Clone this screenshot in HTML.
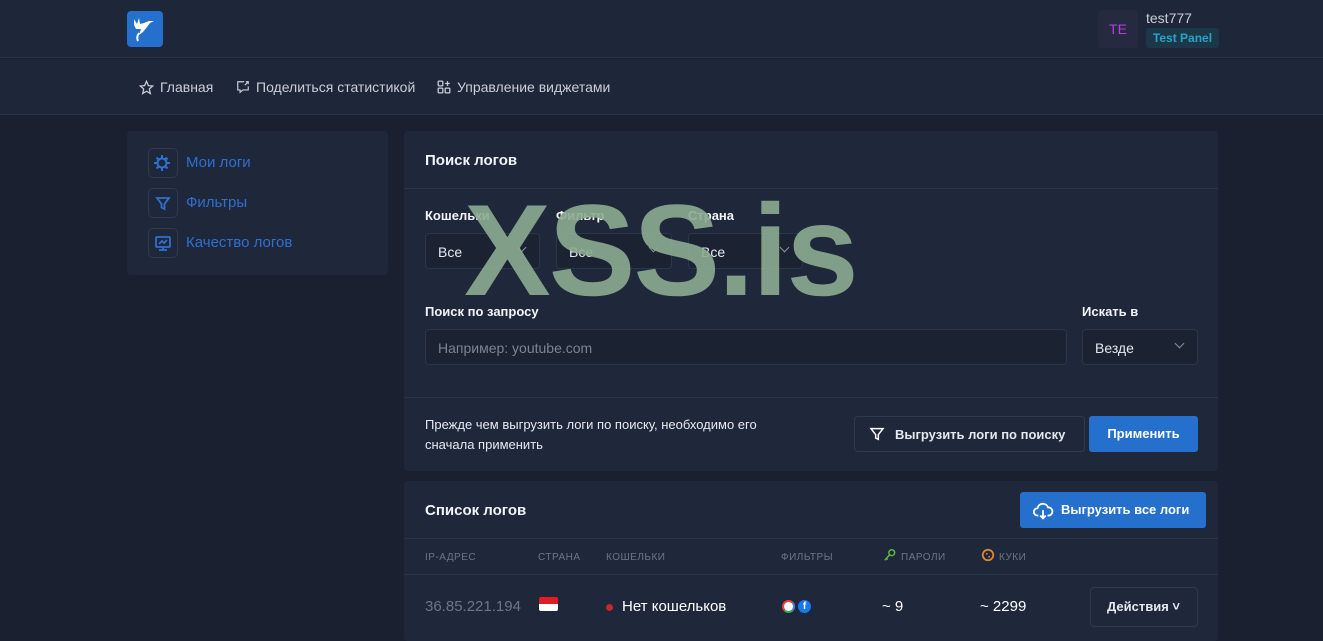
<!DOCTYPE html>
<html><head><meta charset="utf-8"><style>
*{box-sizing:border-box;margin:0;padding:0}
body{width:1323px;height:621px;overflow:hidden;background:#1a2030;font-family:"Liberation Sans",sans-serif;color:#e6e9ef;position:relative}
.hdr{position:absolute;left:0;top:0;width:1323px;height:58px;background:#1e2639;border-bottom:1px solid #2b3548}
.nav{position:absolute;left:0;top:59px;width:1323px;height:56px;background:#1e2639;border-bottom:1px solid #2b3548}
.nav span{position:absolute;top:20px;font-size:14px;color:#c9ced8}
.card{position:absolute;background:#1f283b;border-radius:4px}
.lbl{position:absolute;font-size:13px;font-weight:bold;color:#f1f3f7}
.sel{position:absolute;height:36px;border:1px solid #2c3649;border-radius:4px;background:#1b2232;font-size:14px;color:#e6e9ef;padding:10px 12px}
.sel i{position:absolute;right:14px;top:10px;width:7px;height:7px;border-right:1.3px solid #8a93a3;border-bottom:1.3px solid #8a93a3;transform:rotate(45deg)}
.side{position:absolute;left:148px;width:30px;height:30px;border:1px solid #2e3a50;border-radius:5px}
.sl{position:absolute;left:186px;font-size:15px;color:#2f6fd0}
.th{position:absolute;top:552px;font-size:10px;color:#6d7686;letter-spacing:.5px}
</style></head><body>
<div class="hdr">
 <div style="position:absolute;left:127px;top:11px;width:36px;height:36px;background:#2470cc;border-radius:4px">
  <svg width="36" height="36" viewBox="0 0 36 36"><path d="M7 8l3 5 2-6 1 6 4-1 5-2 5 0-4 2-3 4-4 5-4 3 2-6-5 0-2-4z" fill="#fff"/><path d="M12 22c-2 3-2 6-1 8" stroke="#fff" stroke-width="2" fill="none"/></svg>
 </div>
 <div style="position:absolute;left:1098px;top:10px;width:40px;height:38px;background:#262a40;border-radius:3px;color:#b23fd6;font-size:14px;text-align:center;line-height:38px">TE</div>
 <div style="position:absolute;left:1146px;top:10px;font-size:14px;color:#c9ced8">test777</div>
 <div style="position:absolute;left:1146px;top:28px;width:73px;height:20px;background:#1c3848;border-radius:3px;color:#29a3c9;font-size:12px;font-weight:bold;text-align:center;line-height:20px">Test Panel</div>
</div>
<div class="nav">
 <svg style="position:absolute;left:139px;top:21px" width="15" height="15" viewBox="0 0 24 24"><path d="M12 2l3 7 7 .6-5.5 4.8 1.7 7.3L12 18l-6.2 3.7 1.7-7.3L2 9.6 9 9z" fill="none" stroke="#c9ced8" stroke-width="2"/></svg>
 <span style="left:160px">Главная</span>
 <svg style="position:absolute;left:236px;top:21px" width="14" height="14" viewBox="0 0 24 24"><path d="M14 3H3v14h4v4l5-4h9v-6M17 3h4v4M21 3l-6 6" fill="none" stroke="#c9ced8" stroke-width="2"/></svg>
 <span style="left:256px">Поделиться статистикой</span>
 <svg style="position:absolute;left:437px;top:21px" width="14" height="14" viewBox="0 0 24 24"><rect x="2" y="2" width="8" height="8" rx="1.5" fill="none" stroke="#c9ced8" stroke-width="2.2"/><rect x="2" y="14" width="8" height="8" rx="1.5" fill="none" stroke="#c9ced8" stroke-width="2.2"/><rect x="14" y="14" width="8" height="8" rx="1.5" fill="none" stroke="#c9ced8" stroke-width="2.2"/><path d="M18 2v8M14 6h8" stroke="#c9ced8" stroke-width="2.2"/></svg>
 <span style="left:457px">Управление виджетами</span>
</div>

<div class="card" style="left:127px;top:131px;width:261px;height:144px"></div>
<div class="side" style="top:148px"><svg width="28" height="28" viewBox="0 0 28 28"><circle cx="13" cy="14" r="4.5" fill="none" stroke="#2f6fd0" stroke-width="2"/><path d="M13 6v3M13 19v3M5 14h3M18 14h3M7.5 8.5l2 2M16.5 17.5l2 2M7.5 19.5l2-2M16.5 8.5l2 2" stroke="#2f6fd0" stroke-width="2"/></svg></div>
<div class="sl" style="top:154px">Мои логи</div>
<div class="side" style="top:188px"><svg width="28" height="28" viewBox="0 0 28 28"><path d="M8 9h12l-4.5 6v5l-3-1.5V15z" fill="none" stroke="#2f6fd0" stroke-width="1.8"/></svg></div>
<div class="sl" style="top:194px">Фильтры</div>
<div class="side" style="top:228px"><svg width="28" height="28" viewBox="0 0 28 28"><rect x="7" y="8" width="14" height="10" rx="1" fill="none" stroke="#2f6fd0" stroke-width="1.8"/><path d="M10 15l3-3 2 2 3-3M14 18v3M10 21h8" fill="none" stroke="#2f6fd0" stroke-width="1.8"/></svg></div>
<div class="sl" style="top:234px">Качество логов</div>

<div class="card" style="left:404px;top:131px;width:814px;height:340px"></div>
<div style="position:absolute;left:404px;top:188px;width:814px;border-top:1px solid #2b3548"></div>
<div style="position:absolute;left:404px;top:397px;width:814px;border-top:1px solid #2b3548"></div>
<div class="lbl" style="left:425px;top:152px;font-size:15px">Поиск логов</div>
<div class="lbl" style="left:425px;top:208px">Кошельки</div>
<div class="lbl" style="left:556px;top:208px">Фильтр</div>
<div class="lbl" style="left:688px;top:208px">Страна</div>
<div class="sel" style="left:425px;top:233px;width:115px">Все<i></i></div>
<div class="sel" style="left:556px;top:233px;width:116px">Все<i></i></div>
<div class="sel" style="left:688px;top:233px;width:115px">Все<i></i></div>
<div class="lbl" style="left:425px;top:304px">Поиск по запросу</div>
<div class="lbl" style="left:1082px;top:304px">Искать в</div>
<div class="sel" style="left:425px;top:329px;width:642px;color:#7c8594">Например: youtube.com</div>
<div class="sel" style="left:1082px;top:329px;width:116px">Везде<i></i></div>
<div style="position:absolute;left:425px;top:415px;font-size:13px;line-height:20px;color:#e6e9ef">Прежде чем выгрузить логи по поиску, необходимо его<br>сначала применить</div>
<div style="position:absolute;left:854px;top:416px;width:231px;height:36px;border:1px solid #2e3a50;border-radius:4px;font-size:13px;font-weight:bold;padding:10px 0 0 40px">Выгрузить логи по поиску</div>
<svg style="position:absolute;left:869px;top:426px" width="16" height="16" viewBox="0 0 24 24"><path d="M3 4h18l-7 9v7l-4-2v-5z" fill="none" stroke="#fff" stroke-width="2.2"/></svg>
<div style="position:absolute;left:1089px;top:416px;width:109px;height:36px;background:#2470cc;border-radius:3px;font-size:13px;font-weight:bold;text-align:center;line-height:36px;color:#fff">Применить</div>

<div class="card" style="left:404px;top:481px;width:814px;height:160px"></div>
<div style="position:absolute;left:404px;top:538px;width:814px;border-top:1px solid #2b3548"></div>
<div style="position:absolute;left:404px;top:574px;width:814px;border-top:1px solid #2b3548"></div>
<div class="lbl" style="left:425px;top:502px;font-size:15px">Список логов</div>
<div style="position:absolute;left:1020px;top:492px;width:186px;height:36px;background:#2470cc;border-radius:3px;font-size:13px;font-weight:bold;line-height:36px;padding-left:41px;color:#fff">Выгрузить все логи</div>
<svg style="position:absolute;left:1032px;top:500px" width="22" height="22" viewBox="0 0 24 24"><path d="M7 17H6a4 4 0 010-8 6 6 0 0111.5-1A4.5 4.5 0 0118 17h-1M12 11v9M9 17l3 3 3-3" fill="none" stroke="#fff" stroke-width="2"/></svg>
<div class="th" style="left:425px">IP-АДРЕС</div>
<div class="th" style="left:538px">СТРАНА</div>
<div class="th" style="left:606px">КОШЕЛЬКИ</div>
<div class="th" style="left:781px">ФИЛЬТРЫ</div>
<svg style="position:absolute;left:883px;top:548px" width="14" height="14" viewBox="0 0 24 24"><circle cx="15" cy="8" r="5" fill="none" stroke="#5cbd3b" stroke-width="2.5"/><path d="M11 12l-8 9M6 18l2 2" stroke="#5cbd3b" stroke-width="2.5"/></svg>
<div class="th" style="left:901px">ПАРОЛИ</div>
<svg style="position:absolute;left:981px;top:548px" width="14" height="14" viewBox="0 0 24 24"><circle cx="12" cy="12" r="9" fill="none" stroke="#e0892f" stroke-width="3"/><circle cx="10" cy="10" r="1.5" fill="#e0892f"/><circle cx="14" cy="15" r="1.5" fill="#e0892f"/></svg>
<div class="th" style="left:999px">КУКИ</div>
<div style="position:absolute;left:425px;top:598px;font-size:15px;color:#6d7686">36.85.221.194</div>
<div style="position:absolute;left:539px;top:597px;width:19px;height:14px;border-radius:2px;overflow:hidden"><div style="height:7px;background:#e31b23"></div><div style="height:7px;background:#fff"></div></div>
<div style="position:absolute;left:606px;top:604px;width:7px;height:7px;border-radius:50%;background:#c2282d"></div>
<div style="position:absolute;left:622px;top:598px;font-size:15px;color:#fff">Нет кошельков</div>
<div style="position:absolute;left:782px;top:600px;width:13px;height:13px;border-radius:50%;background:#fff;border:2.5px solid #ea4335;border-right-color:#4285f4;border-bottom-color:#34a853"></div>
<div style="position:absolute;left:798px;top:600px;width:13px;height:13px;border-radius:50%;background:#1877f2;color:#fff;font-size:10px;font-weight:bold;text-align:center;line-height:14px">f</div>
<div style="position:absolute;left:882px;top:598px;font-size:15px;color:#fff">~ 9</div>
<div style="position:absolute;left:980px;top:598px;font-size:15px;color:#fff">~ 2299</div>
<div style="position:absolute;left:1090px;top:587px;width:108px;height:40px;border:1px solid #2e3a50;border-radius:4px;font-size:13px;font-weight:bold;padding:11px 0 0 16px">Действия ˅</div>

<div style="position:absolute;left:464px;top:185px;font-size:130px;font-weight:bold;letter-spacing:-2px;color:rgba(140,172,145,.9);line-height:1">XSS.is</div>
</body></html>
